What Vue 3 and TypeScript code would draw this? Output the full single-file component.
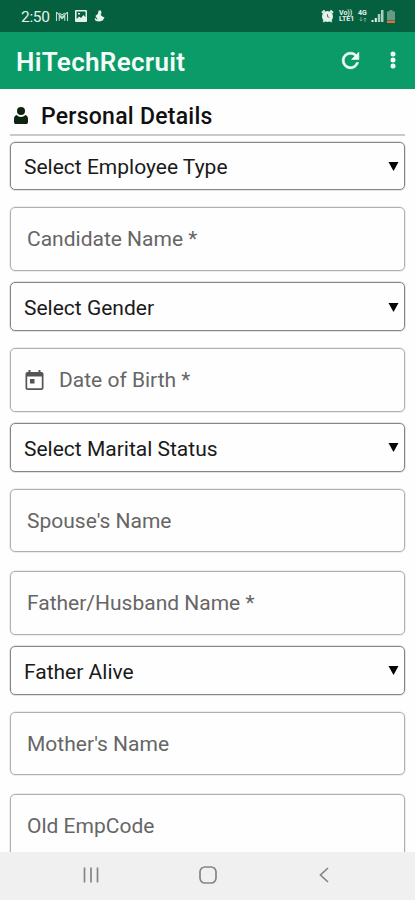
<script setup lang="ts">
interface Field {
  label: string
  kind: 'select' | 'text' | 'date'
}

const fields: Field[] = [
  { label: 'Select Employee Type', kind: 'select' },
  { label: 'Candidate Name *', kind: 'text' },
  { label: 'Select Gender', kind: 'select' },
  { label: 'Date of Birth *', kind: 'date' },
  { label: 'Select Marital Status', kind: 'select' },
  { label: "Spouse's Name", kind: 'text' },
  { label: 'Father/Husband Name *', kind: 'text' },
  { label: 'Father Alive', kind: 'select' },
  { label: "Mother's Name", kind: 'text' },
  { label: 'Old EmpCode', kind: 'text' },
]
</script>

<template>
  <div class="screen">
    <div class="status">
      <span class="clock">2:50</span>
      <svg class="s-mail" viewBox="0 0 14 12"><path d="M1 1v10M13 1v10M1.200 1.500 7 7l5.800-5.500M4 10.500V5.500L7 8.500l3-3v5M4 2l3 2.500L10 2" fill="none" stroke="currentColor" stroke-width="1.200" opacity=".85" /></svg>
      <svg class="s-pic" viewBox="0 0 12 12"><path fill-rule="evenodd" fill="currentColor" d="M1 0h10a1 1 0 0 1 1 1v10a1 1 0 0 1-1 1H1a1 1 0 0 1-1-1V1a1 1 0 0 1 1-1zM1.600 1.600V9l2.600-2.500 1.800 1.500L8.500 5l2 2.200V1.600zM3 3h2v1.500H3z" /></svg>
      <svg class="s-hand" viewBox="0 0 12 12"><path fill="currentColor" d="M5 0h2.500l.7 2.500L7.300 5l1.900 1.500 2.300 1L9.500 11 6 12 2 11.500.5 9l1.500-.7.3 1.200h1.500L1.500 6l2.800-2.500z" /></svg>
      <span class="spacer"></span>
      <svg class="s-alarm" viewBox="0 0 14 14"><circle cx="7" cy="7.500" r="5.900" fill="currentColor" /><path d="M1 3.500 4 1M13 3.500 10 1M2.500 13.300l1.700-1.800M11.500 13.300l-1.700-1.800" stroke="currentColor" stroke-width="2" /><path d="M7 5v2.800l2 .8" fill="none" stroke="#04603f" stroke-width=".8" /></svg>
      <span class="volte"><span>Vo))</span><span>LTE1</span></span>
      <span class="net"><span>4G</span>
        <svg viewBox="0 0 8 5"><path d="M2 0v4M.7 2.700 2 4l1.300-1.300M6 5V1M4.700 2.300 6 1l1.300 1.300" fill="none" stroke="currentColor" stroke-width=".8" /></svg>
      </span>
      <svg class="s-signal" viewBox="0 0 12 12"><path d="M0 10h2v2H0zM3.300 8h2v4h-2z" fill="#e5f2eb" /><path d="M6.300 4h2.500v8H6.300zM9.500 0H12v12H9.500z" fill="#a9cfbd" /></svg>
      <svg class="s-batt" viewBox="0 0 8 13"><path d="M2.500 0h3v1.200H7a1 1 0 0 1 1 1V10H0V2.200a1 1 0 0 1 1-1h1.500z" fill="#659c86" /><path d="M0 10.500h8V13H0z" fill="#e0703f" /></svg>
    </div>

    <header class="bar">
      <h1>HiTechRecruit</h1>
      <svg class="refresh" viewBox="0 0 24 24"><path fill="currentColor" stroke="currentColor" stroke-width=".6" d="M17.650 6.350A7.960 7.960 0 0 0 12 4a8 8 0 1 0 7.730 10h-2.080A6 6 0 1 1 12 6c1.660 0 3.140.69 4.220 1.780L13 11h7V4z" /></svg>
      <svg class="more" viewBox="0 0 6 18"><circle cx="3" cy="3" r="2.500" /><circle cx="3" cy="9" r="2.500" /><circle cx="3" cy="15" r="2.500" /></svg>
    </header>

    <main class="content">
      <div class="section">
        <svg viewBox="0 0 14 17"><circle cx="7" cy="4" r="4" /><path d="M2.800 8c1.200 1.400 2.600 1.900 4.200 1.900S10 9.400 11.200 8c2 .5 2.800 2 2.800 4v3c0 1.500-.8 2-2 2H2c-1.200 0-2-.5-2-2v-3c0-2 .8-3.500 2.800-4z" /></svg>
        <h2>Personal Details</h2>
      </div>
      <div v-for="field in fields" :key="field.label" class="field" :class="field.kind">
        <svg v-if="field.kind === 'date'" class="cal" viewBox="0 0 18 20"><path fill-rule="evenodd" d="M3 0h2v2h8V0h2v2h1a2 2 0 0 1 2 2v14a2 2 0 0 1-2 2H2a2 2 0 0 1-2-2V4a2 2 0 0 1 2-2h1zM1.700 6.500v11.800h14.600V6.500zM4.500 9h4.500v4.500H4.500z" /></svg>
        <span class="label">{{ field.label }}</span>
        <svg v-if="field.kind === 'select'" class="arrow" viewBox="0 0 10 9"><path d="M0 0h10L5 9z" /></svg>
      </div>
    </main>

    <nav class="nav">
      <svg viewBox="0 0 18 18"><path d="M2.500 1.500v15M9 1.500v15M15.500 1.500v15" /></svg>
      <svg viewBox="0 0 18 18"><rect x="1" y="1" width="16" height="16" rx="5" /></svg>
      <svg viewBox="0 0 18 18"><path d="M13 2 5.500 9l7.500 7" /></svg>
    </nav>
  </div>
</template>

<style>
body {
  margin: 0;
  background: #fefefe;
}
</style>

<style scoped>
.screen {
  display: flex;
  flex-direction: column;
  width: 415px;
  height: 900px;
  overflow: hidden;
  background: #fefefe;
  font-family: Roboto, 'Liberation Sans', sans-serif;
}
svg {
  display: block;
  flex: none;
}
.status {
  display: flex;
  flex: none;
  align-items: center;
  box-sizing: border-box;
  height: 32px;
  padding: 0 20px 0 21px;
  background: #04603f;
  color: #e5f2eb;
}
.clock {
  width: 34px;
  padding-top: 1px;
  font-size: 15.500px;
  line-height: 32px;
  letter-spacing: -.3px;
  white-space: nowrap;
}
.s-mail { width: 14px; height: 11px; }
.s-pic { width: 12px; height: 12px; margin-left: 6px; }
.s-hand { width: 11px; height: 12px; margin-left: 7px; }
.spacer { flex: 1; }
.s-alarm { width: 13px; height: 14px; margin-right: 2px; }
.volte {
  display: flex;
  flex-direction: column;
  width: 16px;
  margin-left: 3px;
  font-size: 7px;
  font-weight: 700;
  line-height: 6.500px;
}
.net {
  display: flex;
  flex-direction: column;
  align-items: center;
  width: 9px;
  margin: 0 4px 0 3px;
  font-size: 7px;
  font-weight: 700;
  line-height: 7px;
}
.net svg { width: 8px; height: 5px; opacity: .6; }
.s-signal { width: 13px; height: 12px; }
.s-batt { width: 8px; height: 13px; margin-left: 3px; }
.bar {
  display: flex;
  flex: none;
  align-items: center;
  box-sizing: border-box;
  height: 56.500px;
  padding: 0 19px 0 16px;
  background: #0a9b69;
  color: #f4fcf8;
}
h1 {
  flex: 1;
  margin: 3px 0 0;
  font-size: 26px;
  font-weight: 600;
  line-height: 32px;
  letter-spacing: .3px;
}
.refresh { width: 25px; height: 25px; }
.more { width: 6px; height: 18px; margin-left: 27px; fill: currentColor; }
.content {
  flex: 1;
  min-height: 0;
  padding: 0 10px;
  overflow: hidden;
}
.section {
  display: flex;
  align-items: center;
  box-sizing: border-box;
  height: 47.500px;
  margin-bottom: 5.500px;
  padding: 12px 0 0 4px;
  border-bottom: 2px solid #cacaca;
}
.section svg { width: 14px; height: 17px; margin-top: -4px; fill: #0c2410; }
h2 {
  margin: 0 0 0 13px;
  color: #101010;
  font-size: 23px;
  font-weight: 500;
  line-height: 30px;
  letter-spacing: .25px;
}
.field {
  display: flex;
  align-items: center;
  box-sizing: border-box;
  height: 63.700px;
  margin-bottom: 18.500px;
  padding: 0 16px;
  border: 1px solid #b0b0b0;
  border-radius: 5px;
  box-shadow: 0 0 0 .5px #dcdcdc;
  color: #666;
  font-size: 21px;
  line-height: 28px;
}
.field:has(+ .select) { margin-bottom: 11.400px; }
.select {
  height: 48.900px;
  margin-bottom: 16.800px;
  padding: 3px 5px 0 13px;
  border-color: #858585;
  box-shadow: 0 0 0 .5px #c8c8c8;
  color: #1a1a1a;
}
.label { flex: 1; white-space: nowrap; }
.cal { width: 19px; height: 20px; margin: 0 15px 0 -2px; fill: #555; }
.arrow { width: 11px; height: 9px; margin-top: -2px; fill: #050505; }
.nav {
  display: flex;
  flex: none;
  align-items: center;
  justify-content: space-between;
  box-sizing: border-box;
  height: 48px;
  padding: 0 82px 2px;
  background: #f0f0f0;
}
.nav svg {
  width: 18px;
  height: 18px;
  fill: none;
  stroke: #858585;
  stroke-width: 1.700;
}
</style>
